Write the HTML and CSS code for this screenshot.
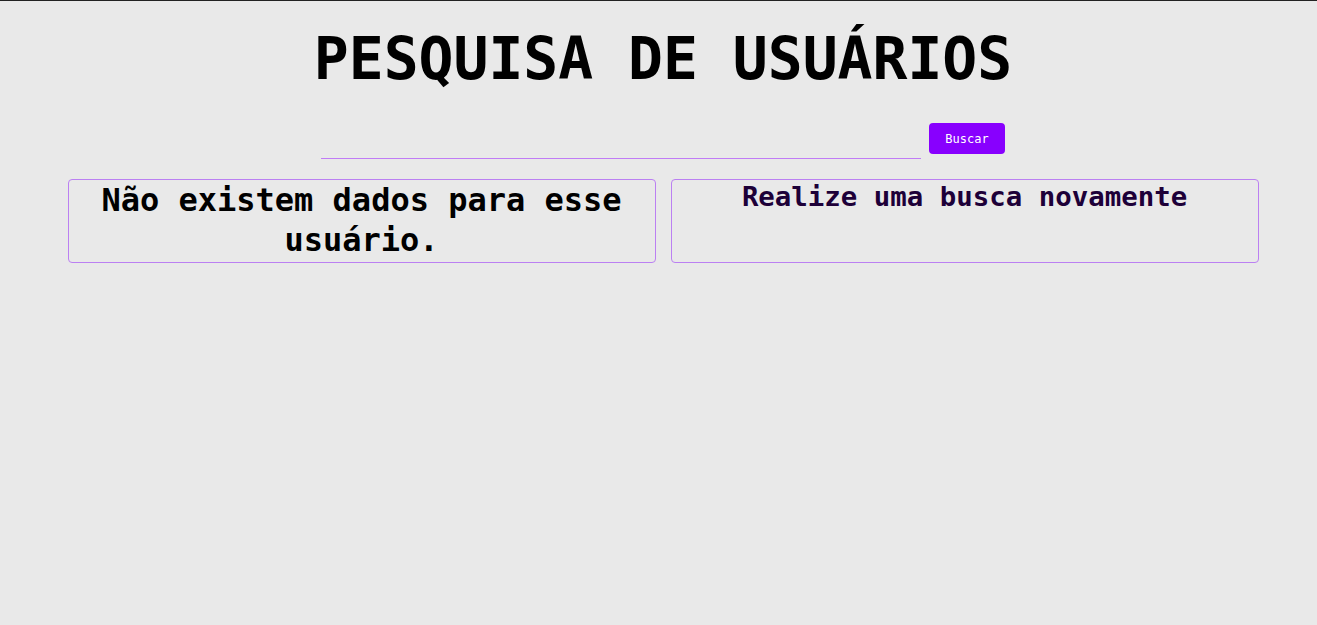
FILE: index.html
```html
<!DOCTYPE html>
<html lang="pt-BR">
<head>
<meta charset="utf-8">
<title>Pesquisa de usuários</title>
<link rel="stylesheet" href="styles.css">
</head>
<body>
<main class="page">
  <h1 class="title">PESQUISA DE USUÁRIOS</h1>
  <form class="search">
    <input class="search-input" type="text" aria-label="Usuário">
    <button class="search-btn" type="button">Buscar</button>
  </form>
  <section class="cards">
    <div class="card"><h2 class="card-msg">Não existem dados para esse usuário.</h2></div>
    <div class="card"><h3 class="card-hint">Realize uma busca novamente</h3></div>
  </section>
</main>
</body>
</html>
```
FILE: styles.css
```css
html, body {
  margin: 0;
  padding: 0;
}
body {
  background: #e9e9e9;
  border-top: 1px solid #222;
  min-height: 624px;
  font-family: "DejaVu Sans Mono", monospace;
}
.page {
  display: flex;
  flex-direction: column;
  align-items: center;
  padding-left: 9px;
}
.title {
  margin: 24px 0 0;
  font-size: 58px;
  font-weight: bold;
  line-height: 68px;
  color: #000;
}
.search {
  display: flex;
  align-items: flex-start;
  gap: 8px;
  margin-top: 30px;
}
.search-input {
  width: 600px;
  height: 36px;
  box-sizing: border-box;
  border: none;
  border-bottom: 1px solid #c07cf6;
  background: transparent;
  outline: none;
  font-family: inherit;
}
.search-btn {
  width: 76px;
  height: 31px;
  border: none;
  border-radius: 4px;
  background: #8800fe;
  color: #fff;
  font-family: "DejaVu Sans Mono", monospace;
  font-size: 12px;
  padding: 0;
}
.cards {
  display: flex;
  gap: 15px;
  margin-top: 20px;
}
.card {
  width: 588px;
  height: 84px;
  box-sizing: border-box;
  border: 1px solid #bb80f2;
  border-radius: 4px;
  text-align: center;
}
.card-msg {
  margin: 0;
  font-size: 32px;
  font-weight: bold;
  line-height: 40px;
  color: #000;
}
.card-hint {
  margin: 0;
  font-size: 27.4px;
  font-weight: bold;
  line-height: 34px;
  color: #1d0038;
}
```
